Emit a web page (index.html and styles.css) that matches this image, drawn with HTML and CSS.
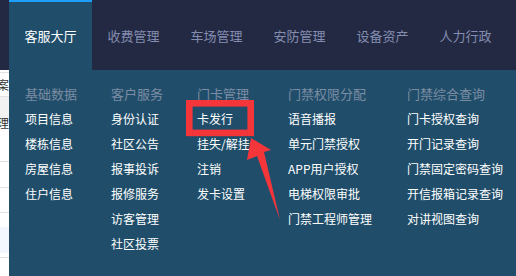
FILE: index.html
```html
<!DOCTYPE html>
<html lang="zh-CN">

  <head>
    <meta charset="UTF-8">
    <meta name="viewport" content="width=device-width, initial-scale=1.0">
    <title>客服大厅</title>
    <link rel="stylesheet" href="styles.css">
  </head>

  <body>
    <div class="topbar">
      <div class="tab active">客服大厅</div>
      <div class="tab">收费管理</div>
      <div class="tab">车场管理</div>
      <div class="tab">安防管理</div>
      <div class="tab">设备资产</div>
      <div class="tab">人力行政</div>
    </div>

    <!-- page behind the dropdown, only a sliver shows on the left -->
    <div class="page">
      <div class="row row-top"></div>
      <div class="row row-a"><span class="cut">案</span></div>
      <div class="row row-b"><span class="cut cut-low">理</span></div>
      <div class="row row-c"></div>
      <div class="row row-d"></div>
      <div class="row row-e"></div>
      <div class="row row-f"><div class="band"></div></div>
    </div>

    <div class="dropdown">
      <div class="col">
        <div class="col-title">基础数据</div>
        <div class="item">项目信息</div>
        <div class="item">楼栋信息</div>
        <div class="item">房屋信息</div>
        <div class="item">住户信息</div>
      </div>
      <div class="col">
        <div class="col-title">客户服务</div>
        <div class="item">身份认证</div>
        <div class="item">社区公告</div>
        <div class="item">报事投诉</div>
        <div class="item">报修服务</div>
        <div class="item">访客管理</div>
        <div class="item">社区投票</div>
      </div>
      <div class="col">
        <div class="col-title">门卡管理</div>
        <div class="item">卡发行</div>
        <div class="item">挂失/解挂</div>
        <div class="item">注销</div>
        <div class="item">发卡设置</div>
      </div>
      <div class="col">
        <div class="col-title">门禁权限分配</div>
        <div class="item">语音播报</div>
        <div class="item">单元门禁授权</div>
        <div class="item">APP用户授权</div>
        <div class="item">电梯权限审批</div>
        <div class="item">门禁工程师管理</div>
      </div>
      <div class="col">
        <div class="col-title">门禁综合查询</div>
        <div class="item">门卡授权查询</div>
        <div class="item">开门记录查询</div>
        <div class="item">门禁固定密码查询</div>
        <div class="item">开信报箱记录查询</div>
        <div class="item">对讲视图查询</div>
      </div>
    </div>

    <!-- red annotation: box around 卡发行 and arrow -->
    <svg class="annotation" width="516" height="276" viewBox="0 0 516 276">
      <rect x="189.3" y="103.3" width="61.4" height="29.6" fill="none" stroke="#f4363b" stroke-width="6.6" />
      <polygon points="251,138 271,150 264,152 280,220 257,156 247,160" fill="#f4363b" />
    </svg>
  </body>

</html>
```

FILE: styles.css
```css
body {
  margin: 0;
  width: 516px;
  height: 276px;
  overflow: hidden;
  position: relative;
  background-color: #fff;
  font-family: "Microsoft YaHei", "Noto Sans CJK SC", sans-serif;
}

.topbar {
  display: flex;
  height: 70px;
  padding-left: 9px;
  background-color: #232942;
}

.tab {
  width: 83px;
  height: 68px;
  line-height: 68px;
  border-top: 2px solid transparent;
  text-align: center;
  font-size: 13px;
  color: #838db1;
}

.tab.active {
  background-color: #204e6a;
  border-top-color: #1e9fff;
  color: #fff;
}

.page {
  font-size: 12px;
  color: #333;
}

.row {
  border-bottom: 1px solid #e2e2e2;
  overflow: hidden;
}

.row-top {
  height: 2px;
}

.row-a {
  height: 23px;
  line-height: 23px;
}

.row-b {
  height: 24px;
  background-color: #f2f2f2;
  overflow: visible;
}

.row-c {
  height: 39px;
}

.row-d {
  height: 25px;
}

.row-e {
  height: 24px;
}

.row-f {
  height: 45px;
  padding-top: 14px;
  box-sizing: border-box;
}

.band {
  height: 26px;
  background-color: #f3f8fe;
}

.cut {
  display: block;
  margin-left: -3px;
}

.cut-low {
  line-height: 20px;
  padding-top: 16px;
}

.dropdown {
  position: absolute;
  top: 70px;
  left: 9px;
  right: 0;
  bottom: 0;
  padding: 11px 0 0 16px;
  background-color: #204e6a;
  display: grid;
  grid-template-columns: 86px 86px 91px 119px auto;
  align-items: start;
}

.col-title {
  line-height: 25px;
  font-size: 13px;
  color: #7c8ca3;
}

.item {
  line-height: 25px;
  font-size: 12px;
  color: #fff;
  white-space: nowrap;
}

.annotation {
  position: absolute;
  top: 0;
  left: 0;
  pointer-events: none;
}
```
